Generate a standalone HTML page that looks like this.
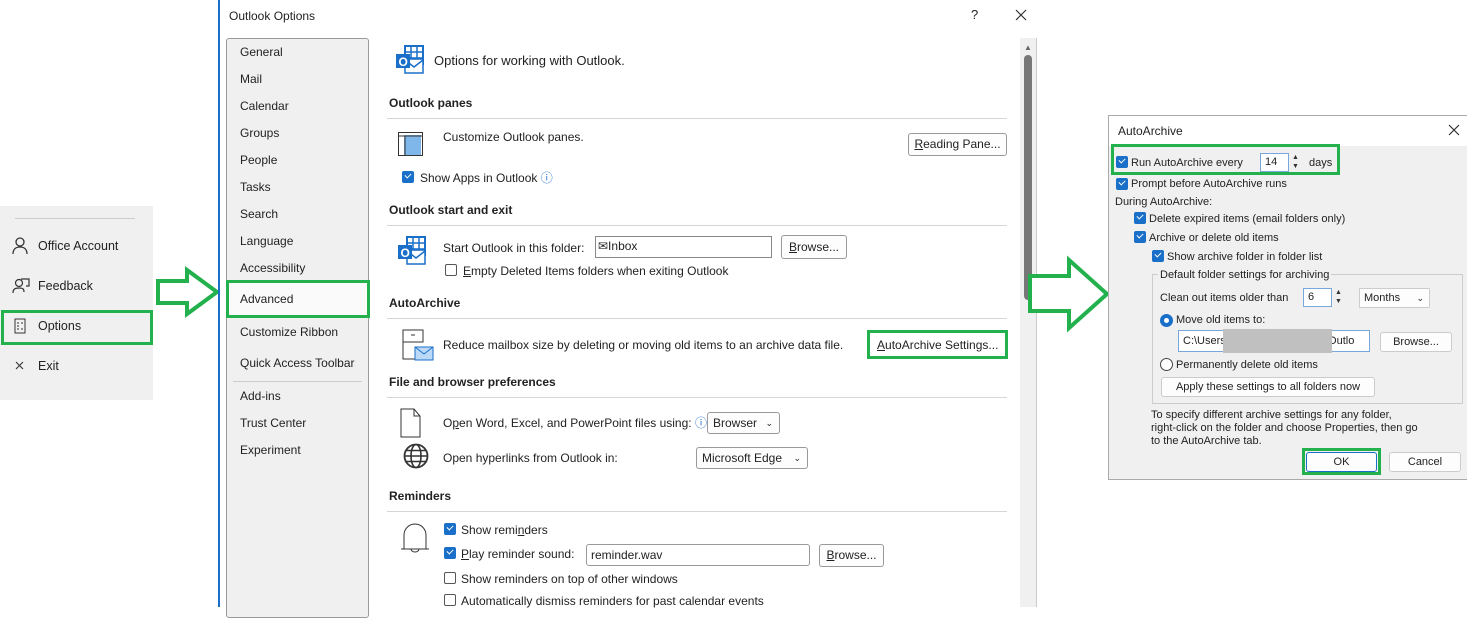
<!DOCTYPE html>
<html><head><style>
*{margin:0;padding:0;box-sizing:border-box}
body{width:1467px;height:607px;background:#fff;position:relative;overflow:hidden;font-family:"Liberation Sans",sans-serif;font-size:12px;color:#222}
.a{position:absolute;white-space:nowrap;line-height:16px}
.g{position:absolute;border:3px solid #22b14c}
.h{font-weight:bold;font-size:12px}
.hr{position:absolute;height:1px;background:#d6d6d6}
.cb{position:absolute;width:12px;height:12px;border-radius:2px;background:#1a6fc9}
.cb::after{content:"";position:absolute;left:3px;top:2px;width:5px;height:3px;border-left:1.5px solid #fff;border-bottom:1.5px solid #fff;transform:rotate(-45deg)}
.ce{position:absolute;width:12px;height:12px;border:1px solid #555;border-radius:2px;background:#fff}
.btn{position:absolute;border:1px solid #999;border-radius:3px;background:#fdfdfd;text-align:center;line-height:20px}
.inp{position:absolute;border:1px solid #888;background:#fff;line-height:18px;padding-left:4px}
</style></head><body>

<!-- left menu -->
<div style="position:absolute;left:0;top:206px;width:153px;height:194px;background:#f0f0f0"></div>
<div class="hr" style="left:15px;top:218px;width:120px;background:#ccc"></div>
<svg class="a" style="left:12px;top:237px" width="16" height="18"><circle cx="8" cy="5" r="4" fill="none" stroke="#333" stroke-width="1.3"/><path d="M1 17c0-5 3-7 7-7s7 2 7 7" fill="none" stroke="#333" stroke-width="1.3"/></svg>
<div class="a" style="left:38px;top:238px;font-size:12.5px">Office Account</div>
<svg class="a" style="left:12px;top:278px" width="18" height="16"><circle cx="7" cy="5" r="3.5" fill="none" stroke="#333" stroke-width="1.2"/><path d="M1 15c0-4 2-5 6-5s5 1 5 4M9 1h8v7h-3" fill="none" stroke="#333" stroke-width="1.2"/></svg>
<div class="a" style="left:38px;top:278px;font-size:12.5px">Feedback</div>
<svg class="a" style="left:14px;top:318px" width="12" height="16"><rect x="1" y="1" width="10" height="14" fill="none" stroke="#333"/><path d="M3 5h2M7 5h2M3 8h2M3 11h2M7 11h2" stroke="#333"/></svg>
<div class="a" style="left:38px;top:318px;font-size:12.5px">Options</div>
<div class="g" style="left:1px;top:310px;width:152px;height:35px"></div>
<svg class="a" style="left:15px;top:361px" width="9" height="9"><path d="M1 1l7 7M8 1l-7 7" stroke="#333" stroke-width="1.1"/></svg>
<div class="a" style="left:38px;top:358px;font-size:12.5px">Exit</div>

<!-- arrow1 -->
<svg class="a" style="left:150px;top:260px" width="75" height="65"><path d="M8 21H37V10L67 32L37 54V43H8Z" fill="#fff" stroke="#22b14c" stroke-width="4"/></svg>

<!-- Outlook options window -->
<div style="position:absolute;left:218px;top:0;width:2px;height:607px;background:#1a6fc9"></div>
<div class="a" style="left:229px;top:8px;font-size:12px">Outlook Options</div>
<div class="a" style="left:971px;top:7px;font-size:13px">?</div>
<svg class="a" style="left:1015px;top:9px" width="12" height="12"><path d="M1 1l10 10M11 1L1 11" stroke="#333" stroke-width="1.2"/></svg>
<div style="position:absolute;left:226px;top:38px;width:143px;height:580px;background:#f0f0f0;border:1px solid #999;border-radius:3px"></div>
<div class="a" style="left:240px;top:44px">General</div>
<div class="a" style="left:240px;top:71px">Mail</div>
<div class="a" style="left:240px;top:98px">Calendar</div>
<div class="a" style="left:240px;top:125px">Groups</div>
<div class="a" style="left:240px;top:152px">People</div>
<div class="a" style="left:240px;top:179px">Tasks</div>
<div class="a" style="left:240px;top:206px">Search</div>
<div class="a" style="left:240px;top:233px">Language</div>
<div class="a" style="left:240px;top:260px">Accessibility</div>
<div style="position:absolute;left:228px;top:283px;width:139px;height:32px;background:#fafafa"></div>
<div class="a" style="left:240px;top:291px">Advanced</div>
<div class="g" style="left:226px;top:280px;width:144px;height:38px"></div>
<div class="a" style="left:240px;top:324px">Customize Ribbon</div>
<div class="a" style="left:240px;top:355px">Quick Access Toolbar</div>
<div class="hr" style="left:233px;top:381px;width:129px;background:#ccc"></div>
<div class="a" style="left:240px;top:388px">Add-ins</div>
<div class="a" style="left:240px;top:415px">Trust Center</div>
<div class="a" style="left:240px;top:442px">Experiment</div>

<!-- scrollbar -->
<div style="position:absolute;left:1020px;top:38px;width:17px;height:569px;background:#f0f0f0;border-right:1px solid #ccc"></div>
<div class="a" style="left:1024px;top:40px;font-size:8px;color:#666">▲</div>
<div style="position:absolute;left:1024px;top:55px;width:8px;height:245px;background:#777;border-radius:4px"></div>

<!-- content -->
<svg class="a" style="left:395px;top:45px" width="32" height="30"><rect x="10" y="1" width="18" height="18" fill="#fff" stroke="#1a6fc9" stroke-width="2"/><path d="M16 1v18M22 1v18M10 7h18M10 13h18" stroke="#1a6fc9" stroke-width="1.5"/><rect x="10" y="14" width="18" height="14" fill="#fff" stroke="#1a6fc9" stroke-width="1.5"/><path d="M10 15l9 7 9-7" fill="none" stroke="#1a6fc9" stroke-width="1.5"/><rect x="1" y="9" width="14" height="14" fill="#1a6fc9"/><text x="3.5" y="21" font-size="12" font-weight="bold" fill="#fff" font-family="Liberation Sans">O</text></svg>
<div class="a" style="left:434px;top:53px;font-size:13px">Options for working with Outlook.</div>

<div class="a h" style="left:389px;top:95px">Outlook panes</div>
<div class="hr" style="left:387px;top:118px;width:620px"></div>
<svg class="a" style="left:398px;top:132px" width="26" height="24"><rect x="6" y="3" width="17" height="20" fill="#7fb7ea"/><rect x="0.5" y="0.5" width="24" height="23" fill="none" stroke="#333"/><path d="M1 4h23M7 4v20" stroke="#333"/></svg>
<div class="a" style="left:443px;top:129px">Customize Outlook panes.</div>
<div class="btn" style="left:908px;top:133px;width:99px;height:23px"><u>R</u>eading Pane...</div>
<div class="cb" style="left:402px;top:171px"></div>
<div class="a" style="left:420px;top:170px">Show Apps in Outlook <span style="color:#1a6fc9">ⓘ</span></div>

<div class="a h" style="left:389px;top:202px">Outlook start and exit</div>
<div class="hr" style="left:387px;top:225px;width:620px"></div>
<svg class="a" style="left:397px;top:236px" width="32" height="30"><rect x="10" y="1" width="18" height="18" fill="#fff" stroke="#1a6fc9" stroke-width="2"/><path d="M16 1v18M22 1v18M10 7h18M10 13h18" stroke="#1a6fc9" stroke-width="1.5"/><rect x="10" y="14" width="18" height="14" fill="#fff" stroke="#1a6fc9" stroke-width="1.5"/><path d="M10 15l9 7 9-7" fill="none" stroke="#1a6fc9" stroke-width="1.5"/><rect x="1" y="9" width="14" height="14" fill="#1a6fc9"/><text x="3.5" y="21" font-size="12" font-weight="bold" fill="#fff" font-family="Liberation Sans">O</text></svg>
<div class="a" style="left:443px;top:240px">Start Outlook in this folder:</div>
<div class="inp" style="left:595px;top:236px;width:177px;height:22px;padding-left:2px">✉Inbox</div>
<div class="btn" style="left:781px;top:235px;width:66px;height:24px;line-height:22px"><u>B</u>rowse...</div>
<div class="ce" style="left:445px;top:264px"></div>
<div class="a" style="left:463px;top:263px"><u>E</u>mpty Deleted Items folders when exiting Outlook</div>

<div class="a h" style="left:389px;top:295px">AutoArchive</div>
<div class="hr" style="left:387px;top:318px;width:620px"></div>
<svg class="a" style="left:400px;top:329px" width="36" height="32"><rect x="3" y="1" width="20" height="12" fill="#fff" stroke="#333"/><path d="M11 6h4" stroke="#333"/><path d="M3 13v17h12" fill="none" stroke="#333"/><rect x="15" y="18" width="18" height="13" fill="#bcdaf7" stroke="#1a6fc9"/><path d="M15 18l9 7 9-7" fill="none" stroke="#1a6fc9"/></svg>
<div class="a" style="left:443px;top:337px">Reduce mailbox size by deleting or moving old items to an archive data file.</div>
<div class="a" style="left:877px;top:337px"><u>A</u>utoArchive Settings...</div>
<div class="g" style="left:867px;top:330px;width:141px;height:29px"></div>

<div class="a h" style="left:389px;top:374px">File and browser preferences</div>
<div class="hr" style="left:387px;top:397px;width:620px"></div>
<svg class="a" style="left:400px;top:408px" width="22" height="30"><path d="M1 1h13l6 7v21H1Z" fill="#fff" stroke="#333"/><path d="M14 1v7h6" fill="none" stroke="#333"/></svg>
<div class="a" style="left:443px;top:415px">O<u>p</u>en Word, Excel, and PowerPoint files using: <span style="color:#1a6fc9">ⓘ</span></div>
<div class="btn" style="left:707px;top:412px;width:73px;height:22px;text-align:left;padding-left:5px;border-color:#999">Browser<span style="position:absolute;right:6px;font-size:9px">⌄</span></div>
<svg class="a" style="left:403px;top:443px" width="26" height="26"><circle cx="13" cy="13" r="11.5" fill="none" stroke="#333" stroke-width="1.8"/><ellipse cx="13" cy="13" rx="5" ry="11.5" fill="none" stroke="#333" stroke-width="1.6"/><path d="M1.5 13h23M3 7.5h20M3 18.5h20" stroke="#333" stroke-width="1.5"/></svg>
<div class="a" style="left:443px;top:450px">Open hyperlinks from Outlook in:</div>
<div class="btn" style="left:696px;top:447px;width:112px;height:22px;text-align:left;padding-left:5px">Microsoft Edge<span style="position:absolute;right:6px;font-size:9px">⌄</span></div>

<div class="a h" style="left:389px;top:488px">Reminders</div>
<div class="hr" style="left:387px;top:511px;width:620px"></div>
<svg class="a" style="left:400px;top:521px" width="30" height="32"><path d="M4 28V14a11 11 0 0 1 22 0v14M1 28h28" fill="none" stroke="#333"/><path d="M11 28a4 3 0 0 0 8 0" fill="none" stroke="#333"/></svg>
<div class="cb" style="left:444px;top:523px"></div>
<div class="a" style="left:461px;top:522px">Show remi<u>n</u>ders</div>
<div class="cb" style="left:444px;top:547px"></div>
<div class="a" style="left:461px;top:546px"><u>P</u>lay reminder sound:</div>
<div class="inp" style="left:586px;top:544px;width:224px;height:22px;border-radius:3px;border-color:#999;line-height:20px">reminder.wav</div>
<div class="btn" style="left:819px;top:544px;width:65px;height:23px"><u>B</u>rowse...</div>
<div class="ce" style="left:444px;top:572px"></div>
<div class="a" style="left:461px;top:571px">Show reminders on top of other windows</div>
<div class="ce" style="left:444px;top:594px"></div>
<div class="a" style="left:461px;top:593px">Automatically dismiss reminders for past calendar events</div>

<!-- arrow2 -->
<svg class="a" style="left:1025px;top:255px" width="90" height="78"><path d="M5 21H44V5L82 39L44 73V56H5Z" fill="#fff" stroke="#22b14c" stroke-width="4"/></svg>

<!-- AutoArchive dialog -->
<div style="position:absolute;left:1108px;top:115px;width:359px;height:365px;background:#f0f0f0;border:1px solid #aaa;border-right:none"></div>
<div style="position:absolute;left:1109px;top:116px;width:358px;height:30px;background:#fff"></div>
<div class="a" style="left:1118px;top:123px;font-size:12px">AutoArchive</div>
<svg class="a" style="left:1448px;top:124px" width="12" height="12"><path d="M1 1l10 10M11 1L1 11" stroke="#333" stroke-width="1.2"/></svg>
<div style="font-size:11px">
<div class="cb" style="left:1116px;top:156px"></div>
<div class="a" style="left:1131px;top:155px;font-size:11px">Run AutoArchive every</div>
<div class="inp" style="left:1260px;top:153px;width:29px;height:19px;line-height:17px;font-size:11px;border-color:#7aa7d9">14</div>
<div class="a" style="left:1292px;top:153px;font-size:7px;line-height:9px;color:#333">▲<br>▼</div>
<div class="a" style="left:1309px;top:155px;font-size:11px">days</div>
<div class="g" style="left:1111px;top:144px;width:229px;height:31px"></div>
<div class="cb" style="left:1116px;top:178px"></div>
<div class="a" style="left:1131px;top:176px;font-size:11px">Prompt before AutoArchive runs</div>
<div class="a" style="left:1115px;top:194px;font-size:11px">During AutoArchive:</div>
<div class="cb" style="left:1134px;top:212px"></div>
<div class="a" style="left:1149px;top:211px;font-size:11px">Delete expired items (email folders only)</div>
<div class="cb" style="left:1134px;top:231px"></div>
<div class="a" style="left:1149px;top:230px;font-size:11px">Archive or delete old items</div>
<div class="cb" style="left:1152px;top:250px"></div>
<div class="a" style="left:1167px;top:249px;font-size:11px">Show archive folder in folder list</div>
<div style="position:absolute;left:1152px;top:274px;width:311px;height:130px;border:1px solid #ccc"></div>
<div class="a" style="left:1158px;top:267px;font-size:11px;background:#f0f0f0;padding:0 2px">Default folder settings for archiving</div>
<div class="a" style="left:1160px;top:290px;font-size:11px">Clean out items older than</div>
<div class="inp" style="left:1303px;top:288px;width:29px;height:19px;line-height:17px;font-size:11px;border-color:#7aa7d9">6</div>
<div class="a" style="left:1335px;top:288px;font-size:7px;line-height:9px;color:#333">▲<br>▼</div>
<div class="btn" style="left:1359px;top:288px;width:71px;height:20px;line-height:18px;text-align:left;padding-left:4px;font-size:11px;border-radius:1px;border-color:#ccc">Months<span style="position:absolute;right:5px;font-size:9px">⌄</span></div>
<div style="position:absolute;left:1160px;top:314px;width:13px;height:13px;border-radius:50%;background:#1a6fc9"></div>
<div style="position:absolute;left:1164px;top:318px;width:5px;height:5px;border-radius:50%;background:#fff"></div>
<div class="a" style="left:1176px;top:312px;font-size:11px">Move old items to:</div>
<div class="inp" style="left:1178px;top:330px;width:192px;height:22px;line-height:20px;font-size:11px;border-color:#7aa7d9;overflow:hidden">C:\Users<span style="position:absolute;left:146px">\Outlo</span></div>
<div style="position:absolute;left:1223px;top:329px;width:109px;height:24px;background:#c0c0c0"></div>
<div class="btn" style="left:1380px;top:332px;width:72px;height:20px;line-height:18px;font-size:11px;border-color:#ccc">Browse...</div>
<div style="position:absolute;left:1160px;top:358px;width:13px;height:13px;border-radius:50%;border:1px solid #444;background:#fff"></div>
<div class="a" style="left:1176px;top:357px;font-size:11px">Permanently delete old items</div>
<div class="btn" style="left:1161px;top:377px;width:214px;height:20px;line-height:18px;font-size:11px;border-color:#ccc">Apply these settings to all folders now</div>
<div class="a" style="left:1151px;top:409px;font-size:11px;line-height:13px">To specify different archive settings for any folder,<br>right-click on the folder and choose Properties, then go<br>to the AutoArchive tab.</div>
<div class="btn" style="left:1306px;top:452px;width:71px;height:20px;line-height:18px;font-size:11px;border-color:#1a6fc9">OK</div>
<div class="g" style="left:1302px;top:448px;width:79px;height:27px"></div>
<div class="btn" style="left:1389px;top:452px;width:72px;height:20px;line-height:18px;font-size:11px;border-color:#ccc">Cancel</div>
</div>
</body></html>
